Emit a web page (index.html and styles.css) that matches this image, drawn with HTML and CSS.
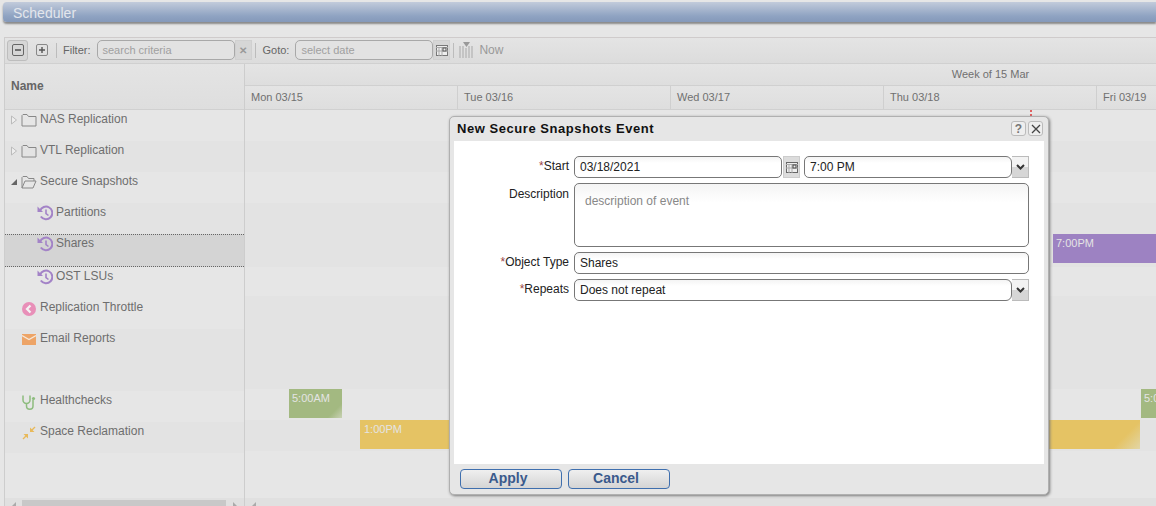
FILE: index.html
```html
<!DOCTYPE html>
<html lang="en">
<head>
<meta charset="utf-8">
<title>Scheduler</title>
<link rel="stylesheet" href="styles.css">
</head>
<body>
<header class="titlebar">Scheduler</header>
<section class="panel">
  <div class="toolbar">
    <button class="tool tool-on"><svg width="12" height="12" viewBox="0 0 12 12"><rect x="0.5" y="0.5" width="11" height="11" rx="1.5" fill="none" stroke="#666"/><path d="M3 6h6" stroke="#444" stroke-width="1.4"/></svg></button>
    <button class="tool"><svg width="12" height="12" viewBox="0 0 12 12"><rect x="0.5" y="0.5" width="11" height="11" rx="1.5" fill="none" stroke="#888"/><path d="M3 6h6M6 3v6" stroke="#555" stroke-width="1.4"/></svg></button>
    <span class="sep"></span>
    <span class="tlabel">Filter:</span>
    <span class="tinput">search criteria</span>
    <span class="tbtn clear">✕</span>
    <span class="sep sep-goto"></span>
    <span class="tlabel">Goto:</span>
    <span class="tinput">select date</span>
    <span class="tbtn"><svg width="12" height="11" viewBox="0 0 12 11"><rect x="0.5" y="0.5" width="11" height="10" fill="#eee" stroke="#777"/><path d="M0 2.5h12M3 3v8M6 3v8M0 6h12" stroke="#aaa" stroke-width="1"/><rect x="7" y="3" width="3" height="3" fill="#eee" stroke="#555"/></svg></span>
    <span class="sep sep-now"></span>
    <svg class="now-ico" width="15" height="17" viewBox="0 0 15 17"><path d="M1 4v12M4 4v12M7 6v10M10 4v12M13 4v12" stroke="#c4c4c4" stroke-width="2"/><path d="M4 0h7l-3.500 5z" fill="#999"/></svg>
    <span class="now">Now</span>
  </div>
  <div class="grid">
    <div class="names">
      <div class="name-head">Name</div>
      <div class="row"><svg class="arrow" width="8" height="10" viewBox="0 0 8 10"><path d="M1.500 1l5 4-5 4z" fill="#eee" stroke="#bbb"/></svg><svg class="ico" width="16" height="14" viewBox="0 0 16 14"><path d="M1 13V2.500L2 1.500h4l1.500 2h7.500v9.500z" fill="none" stroke="#888"/></svg><span>NAS Replication</span></div>
      <div class="row row-alt"><svg class="arrow" width="8" height="10" viewBox="0 0 8 10"><path d="M1.500 1l5 4-5 4z" fill="#eee" stroke="#bbb"/></svg><svg class="ico" width="16" height="14" viewBox="0 0 16 14"><path d="M1 13V2.500L2 1.500h4l1.500 2h7.500v9.500z" fill="none" stroke="#888"/></svg><span>VTL Replication</span></div>
      <div class="row"><svg class="arrow" width="8" height="10" viewBox="0 0 8 10"><path d="M1 8h6V2z" fill="#666"/></svg><svg class="ico" width="16" height="14" viewBox="0 0 16 14"><path d="M1 13V2.500L2 1.500h4l1.500 2h5.500v2.500M1 13l3-7h11l-3 7z" fill="none" stroke="#888"/></svg><span>Secure Snapshots</span></div>
      <div class="row row-alt row-child"><svg class="ico" width="16" height="16" viewBox="0 0 16 16"><path d="M3 6a6.300 6.300 0 1 1 .8 5.500" fill="none" stroke="#a383c7" stroke-width="2"/><path d="M0.500 1.500l5.500 5.500h-5.500z" fill="#a383c7"/><path d="M9 4.500v4l2.500 2" fill="none" stroke="#a383c7" stroke-width="1.600"/></svg><span>Partitions</span></div>
      <div class="row row-sel row-child"><svg class="ico" width="16" height="16" viewBox="0 0 16 16"><path d="M3 6a6.300 6.300 0 1 1 .8 5.500" fill="none" stroke="#a383c7" stroke-width="2"/><path d="M0.500 1.500l5.500 5.500h-5.500z" fill="#a383c7"/><path d="M9 4.500v4l2.500 2" fill="none" stroke="#a383c7" stroke-width="1.600"/></svg><span>Shares</span></div>
      <div class="row row-child"><svg class="ico" width="16" height="16" viewBox="0 0 16 16"><path d="M3 6a6.300 6.300 0 1 1 .8 5.500" fill="none" stroke="#a383c7" stroke-width="2"/><path d="M0.500 1.500l5.500 5.500h-5.500z" fill="#a383c7"/><path d="M9 4.500v4l2.500 2" fill="none" stroke="#a383c7" stroke-width="1.600"/></svg><span>OST LSUs</span></div>
      <div class="row row-solo"><svg class="ico" width="14" height="14" viewBox="0 0 14 14"><circle cx="7" cy="7" r="7" fill="#e88fb8"/><path d="M8.500 3.500L5 7l3.500 3.500" fill="none" stroke="#f3f3f3" stroke-width="2.200"/></svg><span>Replication Throttle</span></div>
      <div class="row row-tall row-solo"><svg class="ico ico-mail" width="14" height="11" viewBox="0 0 14 11"><rect width="14" height="11" fill="#eda467"/><path d="M0 1.500l7 4 7-4" fill="none" stroke="#f5e9dc" stroke-width="1.200"/></svg><span>Email Reports</span></div>
      <div class="row row-solo"><svg class="ico" width="14" height="15" viewBox="0 0 14 15"><path d="M1 .5v4.500a3.500 3.500 0 0 0 7 0V.5M4.500 8.500v2.500a3.200 3.200 0 0 0 6.500 0V5" fill="none" stroke="#8dbc7e" stroke-width="1.500"/><circle cx="11.500" cy="3.500" r="1.600" fill="#8dbc7e"/></svg><span>Healthchecks</span></div>
      <div class="row row-alt row-solo"><svg class="ico" width="14" height="14" viewBox="0 0 14 14"><path d="M8 6V1.500L9.800 3.300 12.500.5 13.500 1.500 10.700 4.200 12.500 6zM6 8V12.500L4.200 10.700 1.500 13.500 .5 12.500 3.300 9.800 1.500 8z" fill="#e8b95a"/></svg><span>Space Reclamation</span></div>
      <div class="names-fill"></div>
      <div class="hscroll"><span class="sarrow sarrow-l"></span><span class="sthumb"></span><span class="sarrow sarrow-r"></span></div>
    </div>
    <div class="timeline">
      <div class="week">Week of 15 Mar</div>
      <div class="days">
        <div class="day">Mon 03/15</div>
        <div class="day">Tue 03/16</div>
        <div class="day">Wed 03/17</div>
        <div class="day">Thu 03/18</div>
        <div class="day">Fri 03/19</div>
      </div>
      <div class="tl-row"></div>
      <div class="tl-row row-alt"></div>
      <div class="tl-row"></div>
      <div class="tl-row row-alt"></div>
      <div class="tl-row tl-shares row-alt"><div class="event ev-purple">7:00PM</div></div>
      <div class="tl-row tl-ost"></div>
      <div class="tl-row row-alt"></div>
      <div class="tl-row tl-tall"></div>
      <div class="tl-row">
        <div class="event ev-green ev-g1">5:00AM</div>
        <div class="event ev-green ev-g2">5:00AM</div>
      </div>
      <div class="tl-row row-alt"><div class="event ev-yellow">1:00PM</div></div>
      <div class="tl-fill"></div>
      <div class="hscroll"><span class="sarrow sarrow-l"></span></div>
    </div>
  </div>
</section>
<span class="now-mark"></span>
<div class="dialog">
  <div class="dlg-title">
    <span class="dlg-name">New Secure Snapshots Event</span>
    <span class="dlg-btn dlg-help">?</span>
    <span class="dlg-btn"><svg width="12" height="12" viewBox="0 0 12 12"><path d="M2 2l8 8M10 2l-8 8" stroke="#444" stroke-width="1.300"/></svg></span>
  </div>
  <div class="dlg-body">
    <label class="flabel"><i>*</i>Start</label>
    <div class="fline">
      <span class="field f-date">03/18/2021</span>
      <span class="cal-btn"><svg width="12" height="11" viewBox="0 0 12 11"><rect x="0.500" y="0.500" width="11" height="10" fill="#eee" stroke="#666"/><path d="M0 2.500h12M3 3v8M6 3v8M0 6h12" stroke="#aaa"/><rect x="7" y="3" width="3" height="3" fill="#eee" stroke="#444"/></svg></span>
      <span class="field f-grow">7:00 PM</span>
      <span class="sel-btn"><svg width="9" height="6" viewBox="0 0 9 6"><path d="M1 1l3.500 3.500L8 1" fill="none" stroke="#333" stroke-width="2"/></svg></span>
    </div>
    <label class="flabel flabel-desc">Description</label>
    <div class="field area">description of event</div>
    <label class="flabel"><i>*</i>Object Type</label>
    <div class="field">Shares</div>
    <label class="flabel"><i>*</i>Repeats</label>
    <div class="fline">
      <span class="field f-grow">Does not repeat</span>
      <span class="sel-btn"><svg width="9" height="6" viewBox="0 0 9 6"><path d="M1 1l3.500 3.500L8 1" fill="none" stroke="#333" stroke-width="2"/></svg></span>
    </div>
  </div>
  <div class="dlg-foot">
    <button class="action">Apply</button>
    <button class="action">Cancel</button>
  </div>
</div>
</body>
</html>
```
FILE: styles.css
```css
* { box-sizing: border-box; }
html, body { margin: 0; height: 506px; overflow: hidden; }
body {
  background: #e6e6e6;
  font-family: "Liberation Sans", Arial, sans-serif;
  font-size: 12px;
  color: #666;
  padding: 2px 0 0 3px;
  position: relative;
}
.titlebar {
  height: 20px;
  margin-bottom: 15px;
  padding: 4px 0 0 10px;
  border-radius: 4px 0 0 4px;
  background: linear-gradient(#c2cbdb, #8fa3c2 70%, #8599ba);
  box-shadow: 0 2px 2px #8a8a8a;
  color: #e3e6ec;
  font-size: 14px;
  line-height: 15px;
}
.panel { margin-left: 1px; border-left: 1px solid #cdcdcd; border-top: 1px solid #cfcbcb; }
.toolbar {
  height: 26px;
  display: flex;
  align-items: center;
  padding: 0 0 1px 2px;
  background: linear-gradient(#e4e4e4, #dcdcdc);
  border-bottom: 1px solid #d0d0d0;
  font-size: 11px;
}
.tool {
  width: 21px; height: 21px;
  display: flex; align-items: center; justify-content: center;
  padding: 0; margin: 0;
  background: none; border: 1px solid transparent; border-radius: 3px;
}
.tool-on { background: #d6d6d6; border-color: #bdbdbd; margin-right: 3px; }
.sep { width: 1px; height: 15px; background: #bcbcbc; margin: 0 6px 0 4px; }
.sep-goto { margin: 0 7px 0 1px; }
.sep-now { margin: 0 5px 0 3px; }
.tlabel { margin-right: 6px; color: #666; }
.tinput {
  width: 138px;
  height: 20px;
  border: 1px solid #a8a8a8;
  border-radius: 5px;
  padding: 0 0 0 5px;
  line-height: 18px;
  color: #a0a0a0;
  background: #e2e2e2;
}
.tbtn {
  width: 17px; height: 20px;
  display: flex; align-items: center; justify-content: center;
  background: #d6d6d6; border: 1px solid #d0d0d0;
  color: #999; font-size: 10px; font-weight: bold;
}
.clear { margin-right: 2px; }
.now-ico { margin: 0 5px 0 0; }
.now { color: #999; font-size: 12px; }
.grid { display: flex; height: 442px; }
.names { width: 240px; display: flex; flex-direction: column; border-right: 1px solid #cdcdcd; }
.name-head {
  height: 46px;
  padding: 15px 0 0 6px;
  background: linear-gradient(#e4e4e4, #dedede);
  border-bottom: 1px solid #d0d0d0;
  color: #666;
  font-weight: bold;
  font-size: 12px;
  line-height: 14px;
}
.row {
  height: 31px;
  display: flex;
  align-items: flex-start;
  padding: 2px 0 0 5px;
  background: #e6e6e6;
  font-size: 12px;
  line-height: 14px;
  flex: none;
}
.row span { color: #6e6e6e; }
.row-alt { background: #e3e3e3; }
.row .arrow { margin: 3px 3px 0 0; flex: none; }
.row .ico { margin: 1px 3px 0 0; flex: none; }
.row-child { padding-left: 32px; }
.row-child .ico { margin: 0 3px 0 0; }
.row-solo { padding-left: 17px; }
.row-solo .ico { margin: 2px 4px 0 0; width: 14px; }
.row-solo .ico-mail { margin-top: 3px; }
.row-sel {
  height: 33px;
  padding-top: 1px;
  background: #d4d4d4;
  border-top: 1px dotted #666;
  border-bottom: 1px dotted #666;
}
.row-tall { height: 62px; background: #e3e3e3; }
.names-fill, .tl-fill { flex: 1; background: #e6e6e6; }
.hscroll { height: 8px; background: #e0e0e0; display: flex; align-items: flex-end; flex: none; overflow: hidden; }
.sarrow { width: 17px; height: 6px; position: relative; }
.sarrow::before {
  content: "";
  position: absolute;
  top: 2px;
  left: 7px;
  border: 4px solid transparent;
}
.sarrow-l::before { border-right-color: #aaa; border-left-width: 0; }
.sarrow-r::before { border-left-color: #aaa; border-right-width: 0; }
.sthumb { width: 204px; height: 6px; background: #c8c8c8; }
.timeline { flex: 1; display: flex; flex-direction: column; min-width: 0; }
.week {
  height: 22px; flex: none;
  background: linear-gradient(#e4e4e4, #dedede);
  border-bottom: 1px solid #d0d0d0;
  text-align: center;
  padding: 4px 0 0 580px;
  font-size: 11px;
  line-height: 13px;
  color: #707070;
}
.days {
  height: 24px; flex: none;
  display: flex;
  background: linear-gradient(#e4e4e4, #dedede);
  border-bottom: 1px solid #d0d0d0;
}
.day {
  width: 213px; flex: none;
  padding: 5px 0 0 6px;
  border-right: 1px solid #cfcfcf;
  font-size: 11px;
  line-height: 13px;
  color: #707070;
}
.day:last-child { border-right: 0; }
.tl-row { height: 31px; flex: none; position: relative; background: #e6e6e6; }
.tl-row.row-alt { background: #e3e3e3; }
.tl-row.tl-shares { height: 33px; }
.tl-row.tl-ost { height: 29px; }
.tl-row.tl-tall { height: 62px; background: #e3e3e3; }
.event {
  position: absolute;
  top: 0;
  height: 29px;
  padding: 2px 0 0 3px;
  font-size: 11px;
  line-height: 14px;
  color: #e4e4e4;
  white-space: nowrap;
  overflow: hidden;
}
.ev-purple { left: 808px; right: 0; background: #9d82c2; }
.ev-green { background: linear-gradient(135deg, #a3b981 82%, #c9d2b5); }
.ev-g1 { left: 44px; width: 53px; }
.ev-g2 { left: 896px; right: 0; background: #a3b981; }
.ev-yellow { left: 115px; width: 780px; background: linear-gradient(135deg, #e5c364 96.500%, #e2d6a6); padding-left: 4px; }
.now-mark { position: absolute; left: 1030px; top: 110px; width: 2px; height: 6px; border-left: 2px dotted #e06060; }
.dialog {
  position: absolute;
  left: 449px; top: 116px;
  width: 600px; height: 379px;
  display: flex; flex-direction: column;
  background: #e6e6e6;
  border: 1px solid #b0b0b0;
  border-radius: 5px;
  box-shadow: 1px 1px 3px #777;
}
.dlg-title { height: 24px; flex: none; display: flex; align-items: center; padding: 0 5px 1px 7px; }
.dlg-name { flex: 1; font-size: 13px; font-weight: bold; color: #111; letter-spacing: 0.550px; }
.dlg-btn {
  width: 15px; height: 15px; margin-left: 2px;
  display: flex; align-items: center; justify-content: center;
  background: #eee; border: 1px solid #bbb; border-radius: 3px;
  color: #777; font-weight: bold; font-size: 12px;
}
.dlg-body {
  flex: 1;
  margin: 0 4px;
  background: #fff;
  padding: 15px 15px 0 0;
  display: grid;
  grid-template-columns: 115px 1fr;
  grid-template-rows: 22px 64px 22px 22px;
  column-gap: 5px;
  row-gap: 5px;
  align-content: start;
  color: #222;
}
.flabel { text-align: right; line-height: 20px; font-size: 12px; color: #222; }
.flabel i { font-style: normal; color: #944; }
.flabel-desc { line-height: 22px; }
.fline { display: flex; min-width: 0; }
.field {
  height: 22px;
  border: 1px solid #777;
  border-radius: 5px;
  padding: 0 0 0 5px;
  line-height: 20px;
  font-size: 12px;
  background: linear-gradient(#f4f4f4, #fff 30%);
  color: #222;
}
.f-date { width: 208px; }
.f-grow { flex: 1; border-radius: 5px 6px 6px 5px; }
.area { height: 64px; padding: 7px 0 0 10px; color: #888; line-height: 20px; }
.cal-btn {
  width: 17px; height: 22px; margin: 0 4px 0 1px;
  display: flex; align-items: center; justify-content: center;
  background: #dcdcdc; border: 1px solid #ccc;
}
.sel-btn {
  width: 17px; height: 22px; flex: none;
  display: flex; align-items: center; justify-content: center;
  background: linear-gradient(#f3f3f3 50%, #d6d6d6 50%);
  border: 1px solid #bbb;
  border-left: 0;
}
.dlg-foot { height: 30px; flex: none; display: flex; gap: 6px; padding: 5px 0 0 10px; align-items: flex-start; }
.action {
  width: 102px; height: 20px; padding: 0 6px 2px 0;
  border: 1px solid #3f6fae;
  border-radius: 4px;
  background: linear-gradient(#efefef, #d4d4d4);
  color: #3a5a8c;
  font: bold 14px/16px "Liberation Sans", Arial, sans-serif;
}
```
